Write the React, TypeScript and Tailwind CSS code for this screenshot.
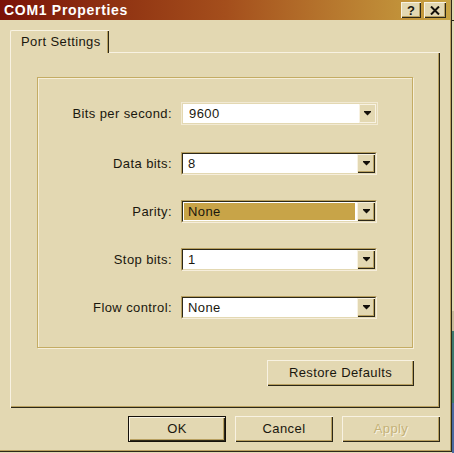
import React from 'react';

const face = 'bg-[#e3d8b2]';

function Arrow() {
  return (
    <svg width="7" height="5" viewBox="0 0 7 5">
      <rect x="0" y="0" width="7" height="1" fill="#14100a" />
      <polygon points="0,1 7,1 3.5,4.5" fill="#14100a" />
    </svg>
  );
}

function Combo({ value, highlight, flat }: { value: string; highlight?: boolean; flat?: boolean }) {
  if (flat) {
    return (
      <div className="w-[197px] h-[23px] border border-[#f2ead4] p-px">
        <div className="h-full flex bg-white">
          <div className="flex-1 flex items-center pl-[6px]">{value}</div>
          <div className="w-[17px] h-full flex items-center justify-center bg-[#e3d8b2] border border-[#f8f2e2]">
            <Arrow />
          </div>
        </div>
      </div>
    );
  }
  return (
    <div className="w-[196px] h-[23px] border-t border-l border-[#b8a060] border-b border-r border-b-[#f6eedc] border-r-[#f6eedc]">
      <div className="h-full flex bg-white border-t border-l border-[#2c2818] border-b border-r border-b-[#e3d8b2] border-r-[#e3d8b2]">
        <div className="flex-1 flex items-center pl-px pr-[2px] py-px">
          <div className={`h-full w-full flex items-center pl-[4px] ${highlight ? 'bg-[#c8a448]' : ''}`}>{value}</div>
        </div>
        <div className="w-[18px] h-full flex items-center justify-center bg-[#e3d8b2] shadow-[inset_1px_1px_0_#f8f2e2,inset_-1px_-1px_0_#2c2818,inset_-2px_-2px_0_#b8a060]">
          <Arrow />
        </div>
      </div>
    </div>
  );
}

function Row({ label, children, top }: { label: string; children: React.ReactNode; top: string }) {
  return (
    <div className={`flex items-center ${top}`}>
      <div className="w-[143px] text-right pr-[9px]">{label}</div>
      {children}
    </div>
  );
}

function Button({ children, wide, def, disabled }: { children: React.ReactNode; wide?: string; def?: boolean; disabled?: boolean }) {
  return (
    <div
      className={`${wide ?? 'w-[98px]'} h-[26px] flex items-center justify-center ${face} ${
        def
          ? 'border border-[#14100a] shadow-[inset_1px_1px_0_#f8f2e2,inset_-1px_-1px_0_#2c2818,inset_-2px_-2px_0_#b8a060]'
          : 'shadow-[inset_1px_1px_0_#f8f2e2,inset_-1px_-1px_0_#2c2818,inset_-2px_-2px_0_#b8a060]'
      } ${disabled ? 'text-[#c4b278] [text-shadow:1px_1px_0_#f8f2e2]' : ''}`}
    >
      {children}
    </div>
  );
}

export default function App() {
  return (
    <div className="w-[454px] h-[453px] flex bg-[#e3d8b2] text-[13px] tracking-[0.4px] text-[#1a170e] font-['Liberation_Sans',Arial,sans-serif] overflow-hidden">
      <div className={`w-[452px] h-[452px] flex flex-col ${face} shadow-[inset_-1px_-1px_0_#2c2818,inset_-2px_-2px_0_#b8a060]`}>
        {/* title bar */}
        <div className="h-[20px] mr-[2px] flex items-center justify-between pl-[4px] pr-[4px] bg-gradient-to-r from-[#7a1008] via-[#a44e1c] to-[#c8a442]">
          <div className="text-white font-bold text-[14px] tracking-[0.7px] leading-none">COM1 Properties</div>
          <div className="flex gap-[3px]">
            <div className="w-[20px] h-[16px] flex items-center justify-center bg-[#e3d8b2] shadow-[inset_1px_1px_0_#f8f2e2,inset_-1px_-1px_0_#2c2818,inset_-2px_-2px_0_#b8a060] font-bold text-[13px] leading-none tracking-normal">?</div>
            <div className="w-[22px] h-[16px] flex items-center justify-center bg-[#e3d8b2] shadow-[inset_1px_1px_0_#f8f2e2,inset_-1px_-1px_0_#2c2818,inset_-2px_-2px_0_#b8a060]">
              <svg width="10" height="9" viewBox="0 0 10 9">
                <path d="M1 0.5 L9 8.5 M9 0.5 L1 8.5" stroke="#14100a" strokeWidth="2" />
              </svg>
            </div>
          </div>
        </div>

        {/* tabs */}
        <div className="pl-[10px] pt-[10px] pr-[12px] flex flex-col">
          <div className="relative z-10 -mb-px w-[99px] h-[23px] flex items-center pl-[10px] bg-[#e3d8b2] border-l border-t border-[#f8f2e2] rounded-tl-[2px] shadow-[inset_-1px_0_0_#2c2818,inset_-2px_0_0_#b8a060]">
            Port Settings
          </div>
          <div className="w-[430px] h-[356px] flex flex-col border-l border-t border-[#f8f2e2] shadow-[inset_-1px_-1px_0_#2c2818,inset_-2px_-2px_0_#b8a060] pl-[26px] pt-[24px]">
            <div className="w-[376px] h-[271px] border border-[#c4ac64] shadow-[inset_1px_1px_0_#f6eed8,1px_1px_0_#f6eed8] flex flex-col">
              <Row label="Bits per second:" top="mt-[24px]">
                <Combo value="9600" flat />
              </Row>
              <Row label="Data bits:" top="mt-[27px]">
                <Combo value="8" />
              </Row>
              <Row label="Parity:" top="mt-[25px]">
                <Combo value="None" highlight />
              </Row>
              <Row label="Stop bits:" top="mt-[25px]">
                <Combo value="1" />
              </Row>
              <Row label="Flow control:" top="mt-[25px]">
                <Combo value="None" />
              </Row>
            </div>
            <div className="w-[377px] flex justify-end mt-[12px]">
              <Button wide="w-[147px]">Restore Defaults</Button>
            </div>
          </div>
        </div>

        {/* bottom buttons */}
        <div className="flex justify-end gap-[9px] pr-[12px] mt-[8px]">
          <Button def>OK</Button>
          <Button>Cancel</Button>
          <Button disabled>Apply</Button>
        </div>
      </div>
      <div className="w-[2px] flex flex-col">
        <div className="h-[20px] bg-[#e3d8b2]" />
        <div className="h-px bg-[#2c2818]" />
        <div className="h-[290px] bg-[#e3d8b2]" />
        <div className="h-[20px] bg-[#c8bc98]" />
        <div className="flex-1 bg-[#3c7a6c]" />
        <div className="h-[50px] bg-[#4a6aa0]" />
      </div>
    </div>
  );
}
